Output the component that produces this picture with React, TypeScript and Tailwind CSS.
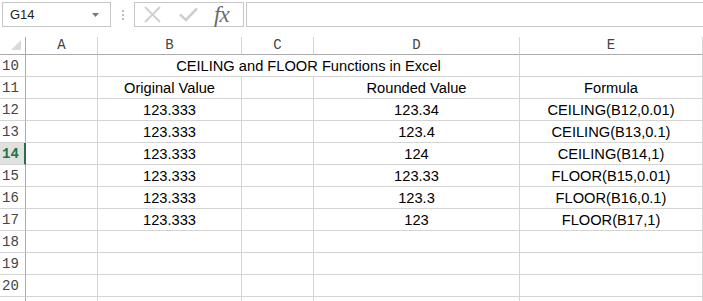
import React from "react";

const cols = ["A", "B", "C", "D", "E"];
const data: [string, string, string][] = [
  ["123.333", "123.34", "CEILING(B12,0.01)"],
  ["123.333", "123.4", "CEILING(B13,0.1)"],
  ["123.333", "124", "CEILING(B14,1)"],
  ["123.333", "123.33", "FLOOR(B15,0.01)"],
  ["123.333", "123.3", "FLOOR(B16,0.1)"],
  ["123.333", "123", "FLOOR(B17,1)"],
];

const cellText = "text-[14.67px] text-black [font-family:'Liberation_Sans',Arial,sans-serif]";

function RowHeader({ n, active }: { n?: number; active?: boolean }) {
  return (
    <div
      className={
        "h-[22px] border-b border-[#d4d4d4] flex items-end pb-[1px] pl-[2px] [font-family:'Liberation_Mono',monospace] text-[14px] leading-[17px] " +
        (active
          ? "bg-[#e1e1e1] border-r-2 border-r-[#217346] text-[#217346] font-bold"
          : "border-r border-r-[#ababab] text-[#444]")
      }
    >
      {n}
    </div>
  );
}

function Cell({ children }: { children?: React.ReactNode }) {
  return (
    <div
      className={
        "h-[22px] border-b border-r border-[#d4d4d4] flex items-center justify-center whitespace-nowrap " +
        cellText
      }
    >
      {children}
    </div>
  );
}

export default function App() {
  const rows: React.ReactNode[] = [];
  rows.push(
    <React.Fragment key="r10">
      <RowHeader n={10} />
      <Cell />
      <div className={"col-span-3 h-[22px] border-b border-r border-[#d4d4d4] flex items-center justify-center " + cellText}>
        CEILING and FLOOR Functions in Excel
      </div>
      <Cell />
    </React.Fragment>
  );
  rows.push(
    <React.Fragment key="r11">
      <RowHeader n={11} />
      <Cell />
      <Cell>Original Value</Cell>
      <Cell />
      <Cell>Rounded Value</Cell>
      <Cell>Formula</Cell>
    </React.Fragment>
  );
  data.forEach((d, i) => {
    const n = 12 + i;
    rows.push(
      <React.Fragment key={"r" + n}>
        <RowHeader n={n} active={n === 14} />
        <Cell />
        <Cell>{d[0]}</Cell>
        <Cell />
        <Cell>{d[1]}</Cell>
        <Cell>{d[2]}</Cell>
      </React.Fragment>
    );
  });
  [18, 19, 20, 0].forEach((n) => {
    rows.push(
      <React.Fragment key={"r" + n}>
        <RowHeader n={n || undefined} />
        <Cell />
        <Cell />
        <Cell />
        <Cell />
        <Cell />
      </React.Fragment>
    );
  });

  return (
    <div className="w-[703px] h-[301px] overflow-hidden bg-white">
      {/* formula bar */}
      <div className="h-[37px] flex items-start pt-[2px] pl-[2px]">
        <div className="w-[109px] h-[25px] border border-[#c6c6c6] flex items-center justify-between pl-[7px] pr-[11px] text-[13px] text-[#222] [font-family:'Liberation_Sans',Arial,sans-serif]">
          <span>G14</span>
          <svg width="7" height="4" viewBox="0 0 7 4">
            <path d="M0 0 L7 0 L3.5 4 Z" fill="#777" />
          </svg>
        </div>
        <div className="w-[23px] h-[25px] flex flex-col items-center justify-center gap-[2px]">
          <div className="w-[2px] h-[2px] bg-[#bbb]" />
          <div className="w-[2px] h-[2px] bg-[#bbb]" />
          <div className="w-[2px] h-[2px] bg-[#bbb]" />
        </div>
        <div className="w-[110px] h-[25px] border border-[#c6c6c6] flex items-center">
          <svg width="17" height="17" viewBox="0 0 17 17" className="ml-[9px]">
            <path d="M1 1 L16 16 M16 1 L1 16" stroke="#cfcfcf" strokeWidth="1.8" fill="none" />
          </svg>
          <svg width="19" height="15" viewBox="0 0 19 15" className="ml-[18px]">
            <path d="M1 7.5 L7 13 L18 1.5" stroke="#cfcfcf" strokeWidth="2.6" fill="none" />
          </svg>
          <span className="ml-[16px] text-[23px] leading-[22px] italic text-[#6a6a6a] [font-family:'Liberation_Serif','Times_New_Roman',serif] tracking-[-1px]">
            fx
          </span>
        </div>
        <div className="ml-[2px] flex-1 h-[25px] border border-[#c6c6c6] border-r-0" />
      </div>

      {/* grid */}
      <div className="grid grid-cols-[26px_72px_144px_72px_206px_183px]">
        <div className="h-[18px] border-b border-r border-b-[#ababab] border-r-[#ababab] relative">
          <svg width="10" height="10" viewBox="0 0 10 10" className="absolute right-[4px] bottom-[4px]">
            <path d="M10 0 L10 10 L0 10 Z" fill="#dadada" />
          </svg>
        </div>
        {cols.map((c) => (
          <div
            key={c}
            className="h-[18px] border-b border-r border-b-[#ababab] border-r-[#d4d4d4] flex items-center justify-center text-[14px] text-[#444] [font-family:'Liberation_Mono',monospace]"
          >
            {c}
          </div>
        ))}
        {rows}
      </div>
    </div>
  );
}
